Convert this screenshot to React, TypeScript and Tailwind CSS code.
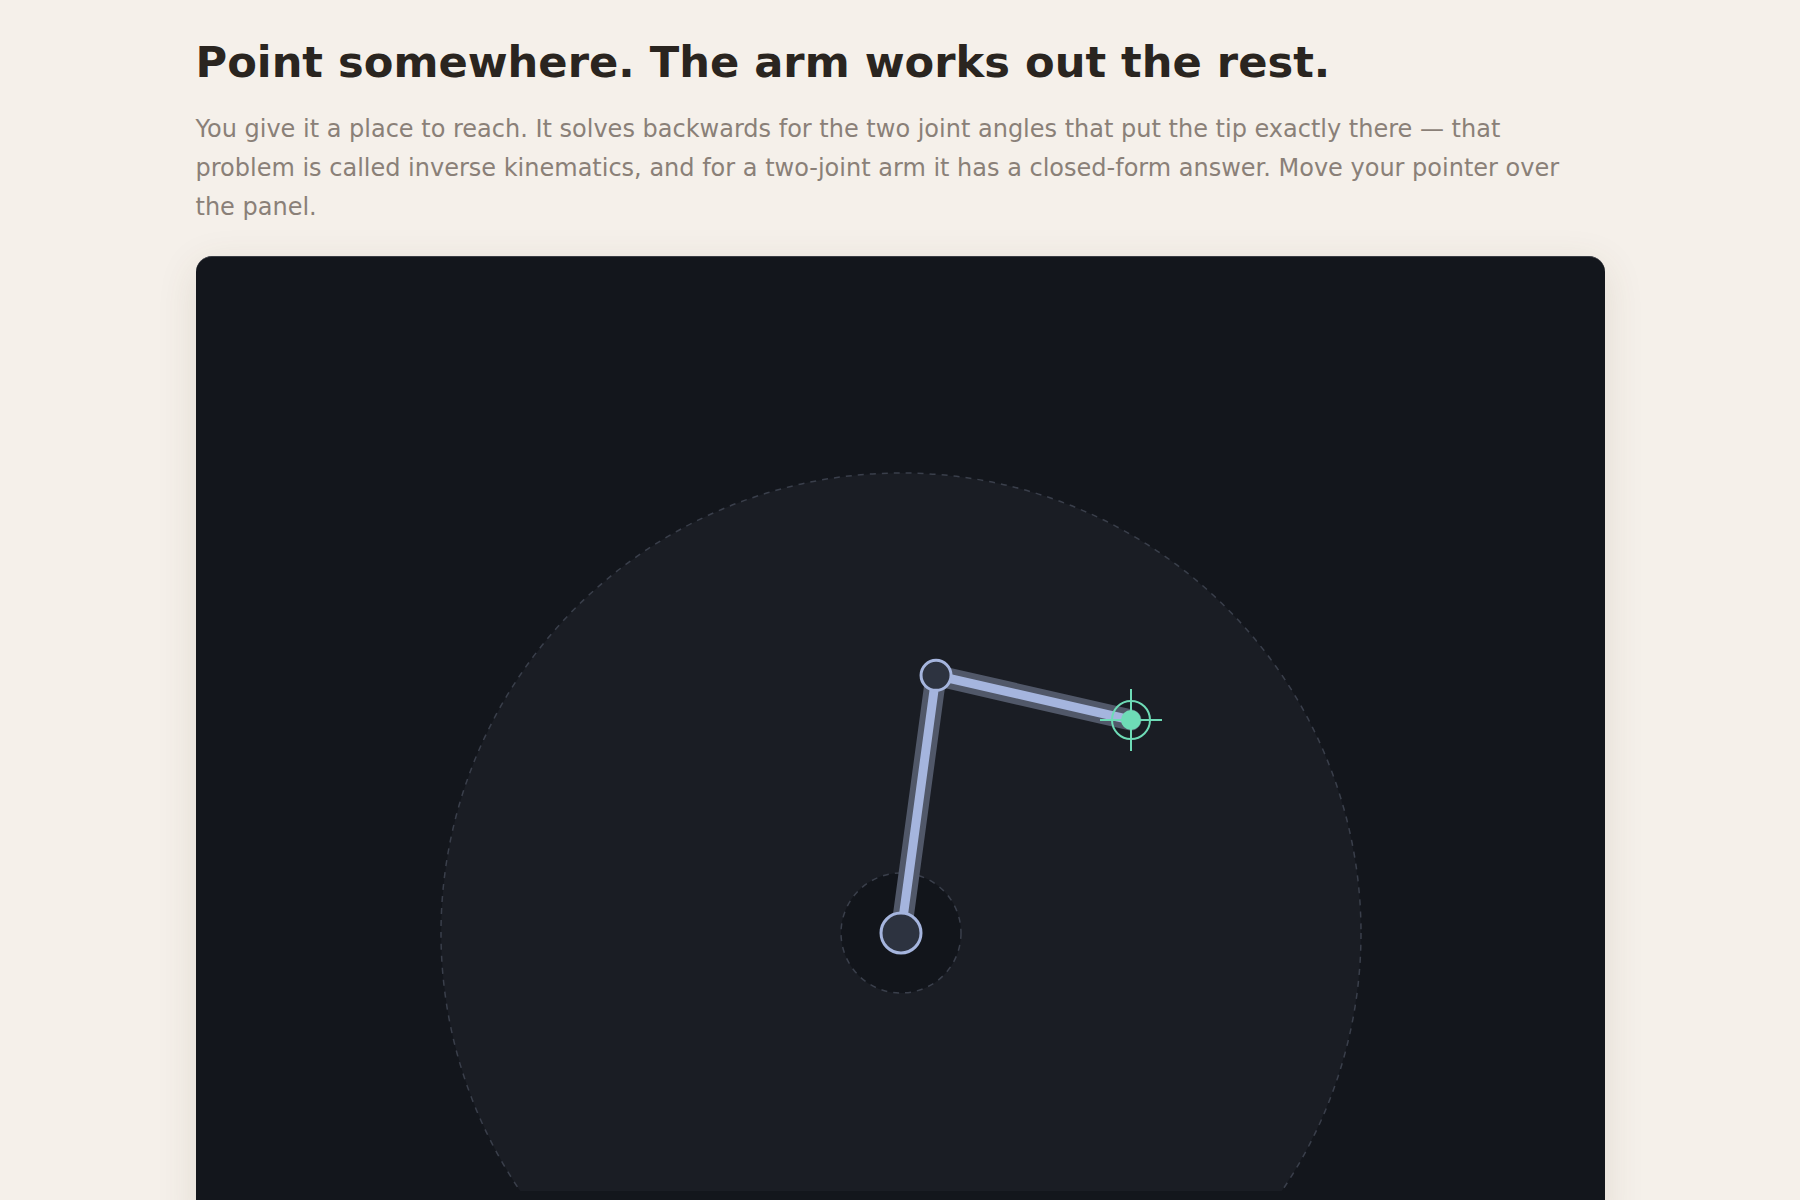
import React from 'react';

// two-link arm geometry, in panel pixels
const BASE = { x: 705, y: 676 };
const L1 = 260;
const L2 = 200;
const TARGET = { x: 935, y: 463 };

function solveIK(tx: number, ty: number) {
  const dx = tx - BASE.x;
  const dy = ty - BASE.y;
  const d = Math.min(Math.hypot(dx, dy), L1 + L2 - 0.001);
  const cosElbow = (d * d - L1 * L1 - L2 * L2) / (2 * L1 * L2);
  const elbow = Math.acos(Math.max(-1, Math.min(1, cosElbow)));
  const shoulder =
    Math.atan2(dy, dx) - Math.atan2(L2 * Math.sin(elbow), L1 + L2 * Math.cos(elbow));
  const ex = BASE.x + L1 * Math.cos(shoulder);
  const ey = BASE.y + L1 * Math.sin(shoulder);
  const px = ex + L2 * Math.cos(shoulder + elbow);
  const py = ey + L2 * Math.sin(shoulder + elbow);
  return { ex, ey, px, py };
}

const ArmPanel: React.FC = () => {
  const { ex, ey, px, py } = solveIK(TARGET.x, TARGET.y);

  return (
    <div className="rounded-2xl bg-[#13161c] border-t border-[#3a3d44] shadow-[0_10px_40px_rgba(90,70,40,0.12)] overflow-hidden pb-10">
      <svg viewBox="0 0 1409 934" className="block w-full h-auto">
        <defs>
          <clipPath id="stage">
            <rect x="0" y="0" width="1409" height="934" />
          </clipPath>
        </defs>
        <g clipPath="url(#stage)">
          {/* reachable annulus */}
          <circle
            cx={BASE.x}
            cy={BASE.y}
            r={L1 + L2}
            fill="#1a1d24"
            stroke="#3a3f4b"
            strokeWidth={1.5}
            strokeDasharray="6 6"
          />
          <circle
            cx={BASE.x}
            cy={BASE.y}
            r={L1 - L2}
            fill="#12151b"
            stroke="#3a3f4b"
            strokeWidth={1.5}
            strokeDasharray="6 6"
          />
        </g>

        {/* links */}
        <g strokeLinecap="round">
          <line x1={BASE.x} y1={BASE.y} x2={ex} y2={ey} stroke="#515869" strokeWidth={21} />
          <line x1={ex} y1={ey} x2={px} y2={py} stroke="#515869" strokeWidth={21} />
          <line x1={BASE.x} y1={BASE.y} x2={ex} y2={ey} stroke="#a5b5de" strokeWidth={9} />
          <line x1={ex} y1={ey} x2={px} y2={py} stroke="#a5b5de" strokeWidth={9} />
        </g>

        {/* joints */}
        <circle cx={BASE.x} cy={BASE.y} r={20} fill="#2d3340" stroke="#a5b5de" strokeWidth={3} />
        <circle cx={ex} cy={ey} r={15} fill="#2d3340" stroke="#a5b5de" strokeWidth={3} />

        {/* target crosshair */}
        <g stroke="#6edbb6" strokeWidth={2} fill="none">
          <circle cx={TARGET.x} cy={TARGET.y} r={19} />
          <line x1={TARGET.x - 31} y1={TARGET.y} x2={TARGET.x + 31} y2={TARGET.y} />
          <line x1={TARGET.x} y1={TARGET.y - 31} x2={TARGET.x} y2={TARGET.y + 31} />
        </g>
        <circle cx={px} cy={py} r={10} fill="#6edbb6" />
      </svg>
    </div>
  );
};

export default function App() {
  return (
    <div className="min-h-screen bg-[#f5f0ea] font-['DejaVu_Sans',sans-serif]">
      <div className="mx-auto max-w-[1409px] pt-[36px]">
        <h1 className="text-[43.2px] leading-[52px] font-bold text-[#2a2520]">
          Point somewhere. The arm works out the rest.
        </h1>
        <p className="mt-[22px] max-w-[1380px] text-[24px] leading-[39px] text-[#8a8078]">
          You give it a place to reach. It solves backwards for the two joint angles that put the tip
          exactly there — that problem is called inverse kinematics, and for a two-joint arm it has a
          closed-form answer. Move your pointer over the panel.
        </p>
        <div className="mt-[29px]">
          <ArmPanel />
        </div>
      </div>
    </div>
  );
}
